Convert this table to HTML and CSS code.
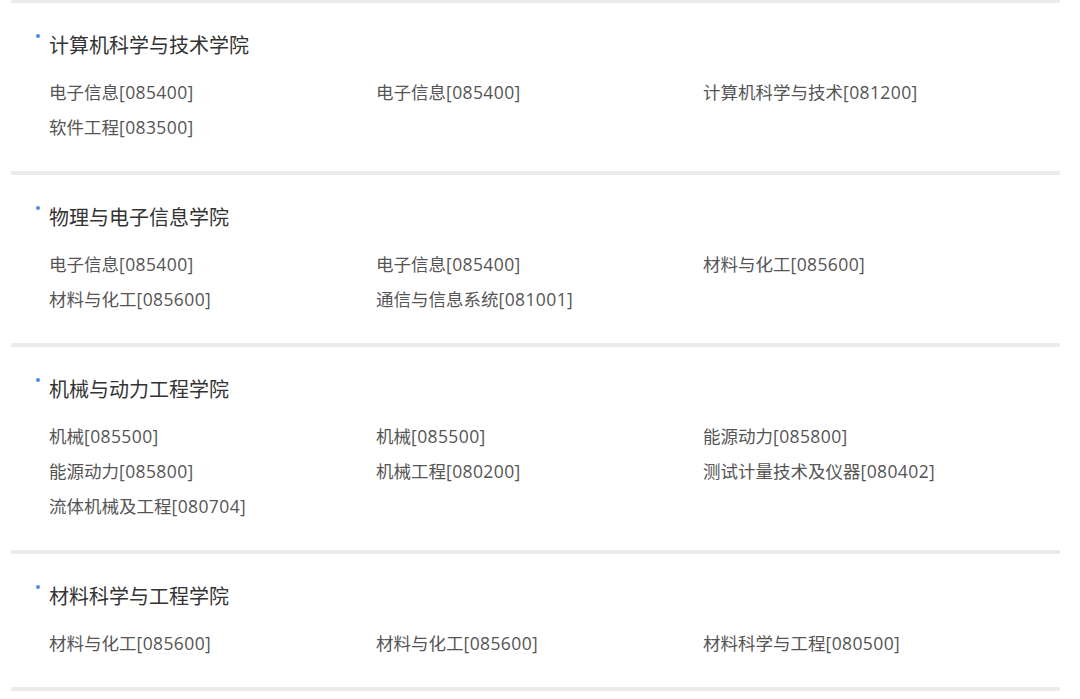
FILE: index.html
```html
<!DOCTYPE html>
<html lang="zh-CN">
<head>
<meta charset="utf-8">
<link rel="stylesheet" href="styles.css">
</head>
<body>
<div class="list">
  <section class="college first">
    <h2 class="college-name">计算机科学与技术学院</h2>
    <ul class="majors">
      <li>电子信息<span class="code">[085400]</span></li>
      <li>电子信息<span class="code">[085400]</span></li>
      <li>计算机科学与技术<span class="code">[081200]</span></li>
      <li>软件工程<span class="code">[083500]</span></li>
    </ul>
  </section>
  <section class="college">
    <h2 class="college-name">物理与电子信息学院</h2>
    <ul class="majors">
      <li>电子信息<span class="code">[085400]</span></li>
      <li>电子信息<span class="code">[085400]</span></li>
      <li>材料与化工<span class="code">[085600]</span></li>
      <li>材料与化工<span class="code">[085600]</span></li>
      <li>通信与信息系统<span class="code">[081001]</span></li>
    </ul>
  </section>
  <section class="college">
    <h2 class="college-name">机械与动力工程学院</h2>
    <ul class="majors">
      <li>机械<span class="code">[085500]</span></li>
      <li>机械<span class="code">[085500]</span></li>
      <li>能源动力<span class="code">[085800]</span></li>
      <li>能源动力<span class="code">[085800]</span></li>
      <li>机械工程<span class="code">[080200]</span></li>
      <li>测试计量技术及仪器<span class="code">[080402]</span></li>
      <li>流体机械及工程<span class="code">[080704]</span></li>
    </ul>
  </section>
  <section class="college">
    <h2 class="college-name">材料科学与工程学院</h2>
    <ul class="majors">
      <li>材料与化工<span class="code">[085600]</span></li>
      <li>材料与化工<span class="code">[085600]</span></li>
      <li>材料科学与工程<span class="code">[080500]</span></li>
    </ul>
  </section>
  <div class="end-rule"></div>
</div>
</body>
</html>
```

FILE: styles.css
```css
html, body {
  margin: 0;
  padding: 0;
  background: #ffffff;
}

body {
  font-family: "Noto Sans CJK SC", "Noto Sans", sans-serif;
}

.list {
  width: 1049px;
  margin-left: 11px;
}

.college {
  border-top: 4px solid #ebebeb;
  padding: 28px 0 26px 25px;
}

.college.first {
  border-top-width: 3px;
}

.end-rule {
  height: 4px;
  background: #ebebeb;
}

.college-name {
  display: flex;
  align-items: flex-start;
  margin: 0;
  font-size: 20px;
  font-weight: 400;
  line-height: 28px;
  color: #333333;
}

.college-name::before {
  content: "";
  width: 4px;
  height: 4px;
  border-radius: 50%;
  background: #4a90e2;
  margin: 3px 9px 0 0;
  flex: none;
}

.majors {
  list-style: none;
  margin: 16px 0 0 0;
  padding: 0 0 0 13px;
  display: grid;
  grid-template-columns: repeat(3, 327px);
}

.majors li {
  font-family: "Open Sans", "Noto Sans CJK SC", sans-serif;
  font-size: 17.5px;
  line-height: 35px;
  color: #555555;
  white-space: nowrap;
}

.code {
  letter-spacing: 0.4px;
}
```
